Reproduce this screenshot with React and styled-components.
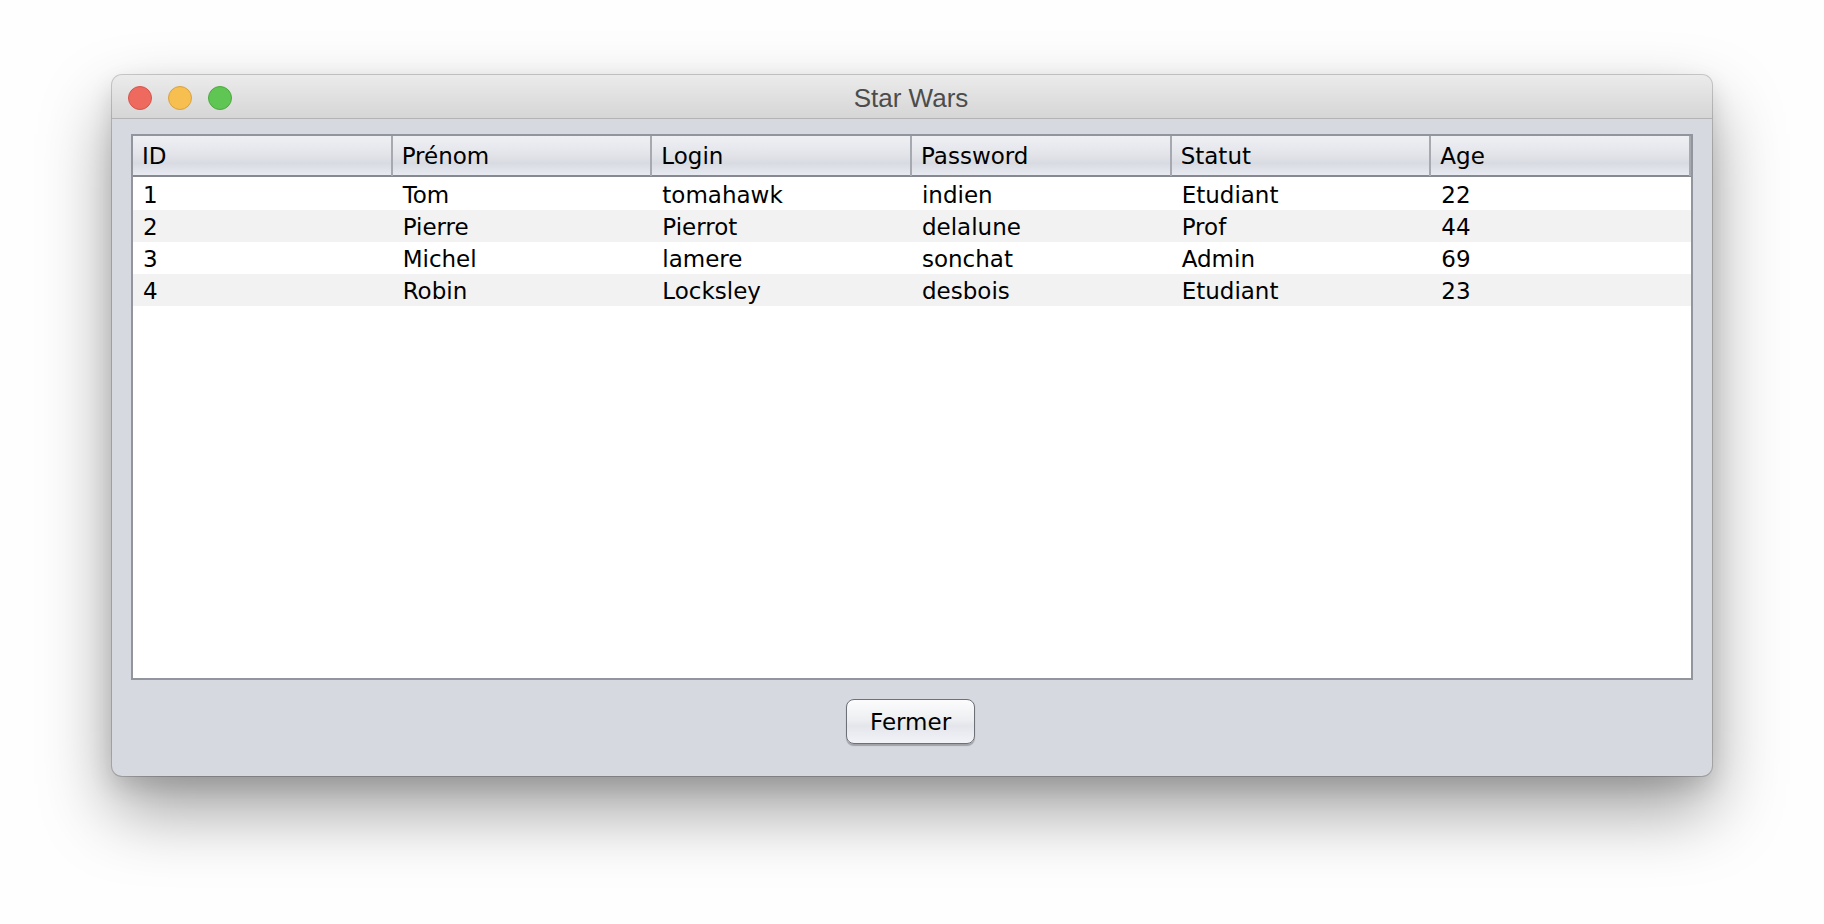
import React from "react";
import styled, { createGlobalStyle } from "styled-components";

const Global = createGlobalStyle`
  html, body { margin: 0; padding: 0; background: #ffffff; }
  body { font-family: "DejaVu Sans", "Liberation Sans", sans-serif; }
  * { box-sizing: border-box; }
`;

const Page = styled.div`
  width: 1824px;
  height: 924px;
  padding: 75px 0 0 112px;
  background: #fefefe;
  overflow: hidden;
`;

const Window = styled.div`
  width: 1600px;
  height: 701px;
  border-radius: 10px;
  background: #d6d9e0;
  display: flex;
  flex-direction: column;
  overflow: hidden;
  box-shadow: 0 0 0 1px rgba(0, 0, 0, 0.18), 0 34px 70px rgba(0, 0, 0, 0.38),
    0 10px 24px rgba(0, 0, 0, 0.12);
`;

const TitleBar = styled.div`
  position: relative;
  height: 44px;
  flex: none;
  background: linear-gradient(#ebebeb, #d6d6d6);
  border-bottom: 1px solid #b3b3b3;
  display: flex;
  align-items: center;
  justify-content: center;
`;

const Lights = styled.div`
  position: absolute;
  left: 16px;
  top: 11px;
  display: flex;
  gap: 16px;
`;

const Light = styled.span`
  width: 24px;
  height: 24px;
  border-radius: 50%;
  background: ${(p) => p.$bg};
  border: 1px solid ${(p) => p.$bd};
`;

const Title = styled.div`
  font-family: "Liberation Sans", Arial, sans-serif;
  font-size: 26px;
  line-height: 44px;
  padding-top: 3px;
  color: #4c4c4c;
  margin-left: -2px;
`;

const Content = styled.div`
  flex: 1;
  display: flex;
  flex-direction: column;
  align-items: stretch;
  gap: 19px;
  padding: 15px 19px 32px 19px;
`;

const Table = styled.div`
  height: 546px;
  flex: none;
  background: #ffffff;
  border: 2px solid #92959e;
  display: flex;
  flex-direction: column;
`;

const HeaderRow = styled.div`
  display: grid;
  grid-template-columns: repeat(6, 1fr);
  height: 41px;
  border-bottom: 2px solid #86898f;
  background: linear-gradient(#eef0f4 0%, #e3e5ea 45%, #d9dbe2 70%, #e8eaf1 100%);
`;

const HeaderCell = styled.div`
  padding-left: 9px;
  padding-top: 1px;
  font-size: 23px;
  line-height: 39px;
  color: #000;
  border-right: 2px solid #a6a9b0;
  white-space: nowrap;
`;

const Row = styled.div`
  display: grid;
  grid-template-columns: repeat(6, 1fr);
  height: ${(p) => (p.$first ? 33 : 32)}px;
  padding-top: ${(p) => (p.$first ? 4 : 3)}px;
  background: ${(p) => (p.$alt ? "#f2f2f2" : "#ffffff")};
`;

const Cell = styled.div`
  padding-left: 10px;
  font-size: 23px;
  line-height: 29px;
  color: #000;
  white-space: nowrap;
`;

const ButtonRow = styled.div`
  display: flex;
  justify-content: center;
`;

const Button = styled.button`
  width: 129px;
  height: 45px;
  margin-left: -3px;
  border: 1.5px solid #6e7078;
  border-radius: 8px;
  background: linear-gradient(#fcfcfd 0%, #eeeff2 45%, #e4e6eb 60%, #f2f3f9 100%);
  box-shadow: 0 1.5px 1px rgba(0, 0, 0, 0.25);
  font-family: "DejaVu Sans", sans-serif;
  font-size: 23px;
  color: #000;
  padding: 0;
`;

const columns = ["ID", "Prénom", "Login", "Password", "Statut", "Age"];
const rows = [
  ["1", "Tom", "tomahawk", "indien", "Etudiant", "22"],
  ["2", "Pierre", "Pierrot", "delalune", "Prof", "44"],
  ["3", "Michel", "lamere", "sonchat", "Admin", "69"],
  ["4", "Robin", "Locksley", "desbois", "Etudiant", "23"],
];

export default function App() {
  return (
    <>
      <Global />
      <Page>
        <Window>
          <TitleBar>
            <Lights>
              <Light $bg="#ee6a5f" $bd="#d5544b" />
              <Light $bg="#f6bf4f" $bd="#d9a23f" />
              <Light $bg="#5fc553" $bd="#4ea83f" />
            </Lights>
            <Title>Star Wars</Title>
          </TitleBar>
          <Content>
            <Table>
              <HeaderRow>
                {columns.map((c) => (
                  <HeaderCell key={c}>{c}</HeaderCell>
                ))}
              </HeaderRow>
              {rows.map((r, i) => (
                <Row key={i} $alt={i % 2 === 1} $first={i === 0}>
                  {r.map((v, j) => (
                    <Cell key={j}>{v}</Cell>
                  ))}
                </Row>
              ))}
            </Table>
            <ButtonRow>
              <Button>Fermer</Button>
            </ButtonRow>
          </Content>
        </Window>
      </Page>
    </>
  );
}
